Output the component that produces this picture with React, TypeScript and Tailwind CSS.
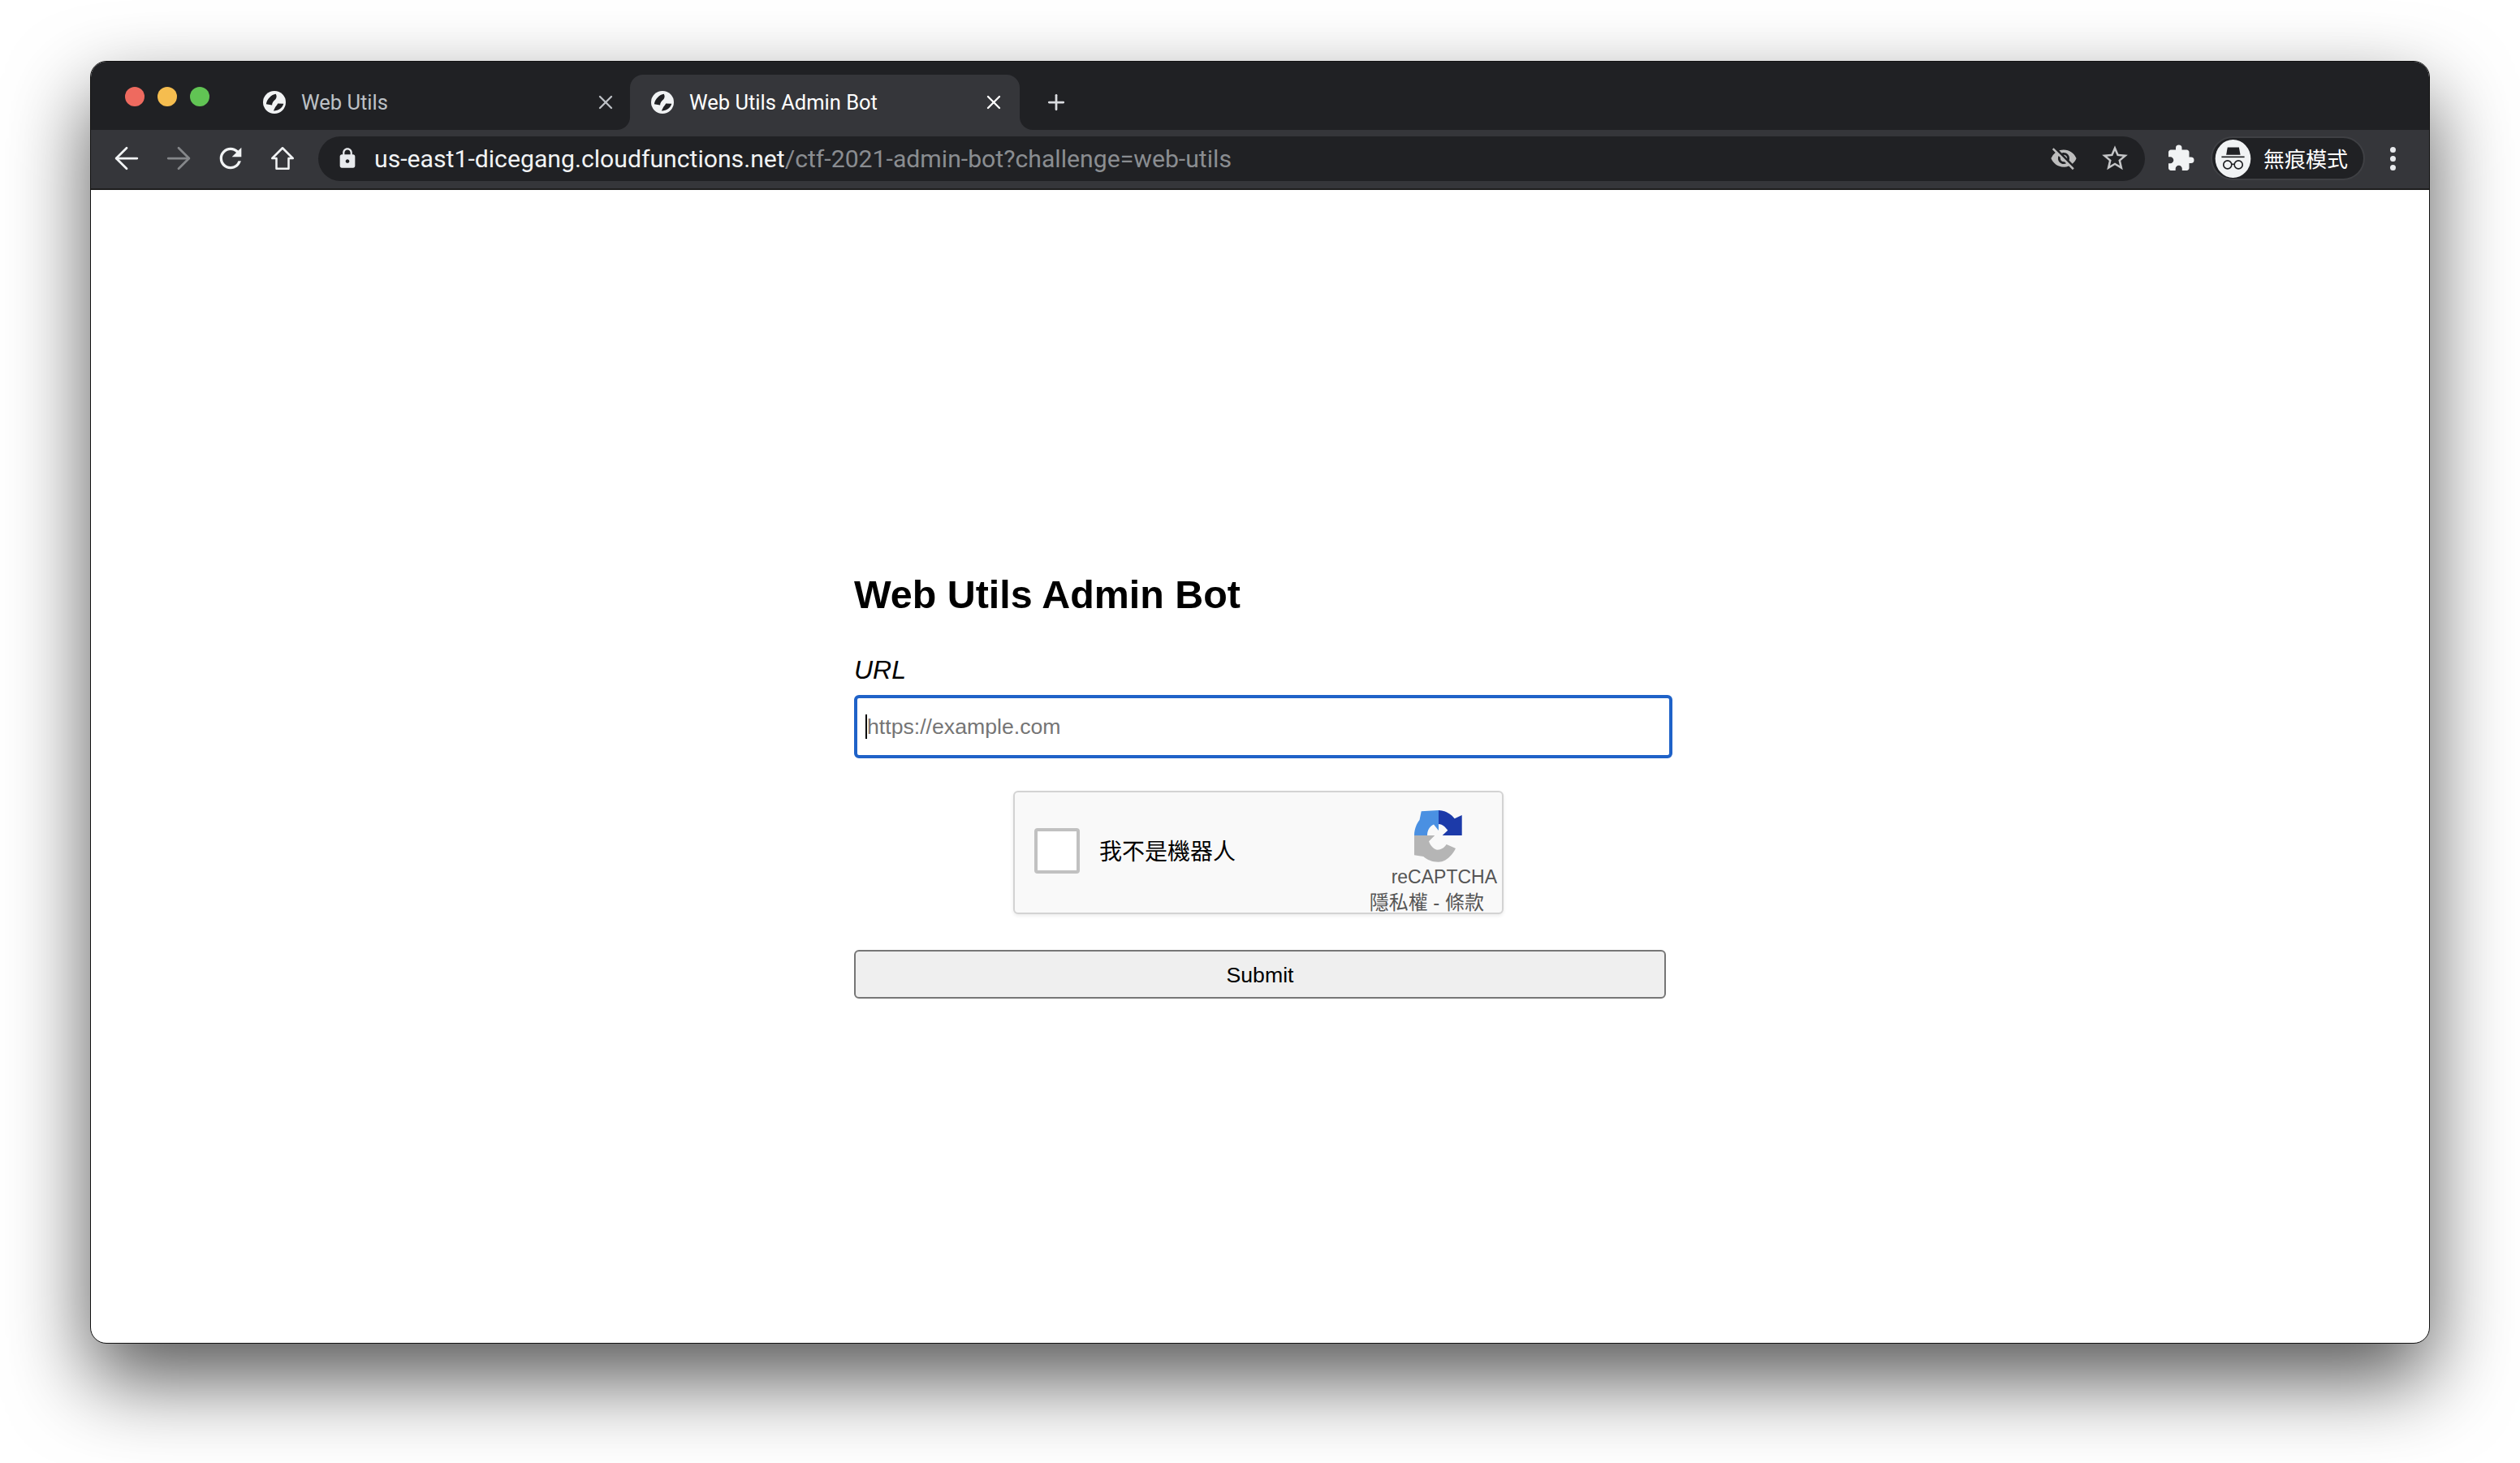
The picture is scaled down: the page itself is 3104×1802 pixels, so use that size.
import { ArrowLeft, ArrowRight, X, Plus } from 'lucide-react'
import { MdExtension, MdStarBorder, MdVisibilityOff, MdRefresh, MdLock } from 'react-icons/md'

const Globe = () => (
  <svg width="28" height="28" viewBox="0 0 24 24" className="shrink-0">
    <circle cx="12" cy="12" r="12" fill="#f1f3f4" />
    <path d="M13.5 3.2C9 3.8 4 8.5 3.3 14L9.5 15C9.5 12.5 11 11 12.5 9.5C14 8 15 6 13.5 3.2Z" fill="#202124" />
    <path d="M21.7 13.5L15.5 13.3C15 15.5 13.2 16 12.5 18L11 21C16 21.2 20.5 18 21.7 13.5Z" fill="#202124" />
  </svg>
)

const Tab = ({ title, active }: { title: string; active?: boolean }) => (
  <div className={active ? 'relative flex items-center w-[480px] h-[68px] pl-[26px] pr-[18px] rounded-t-[16px] bg-[#35363a] text-white' : 'flex items-center w-[478px] h-[68px] pl-[26px] pr-[16px] text-[#bdc1c6]'}>
    <Globe />
    <span className="ml-[19px] flex-1 text-[25.5px] leading-[32px]">{title}</span>
    <X size={28} strokeWidth={2} />
    {active && (
      <>
        <span className="absolute left-[-16px] bottom-0 w-[16px] h-[16px] bg-[#35363a]">
          <span className="block w-full h-full bg-[#202124] rounded-br-[16px]" />
        </span>
        <span className="absolute right-[-16px] bottom-0 w-[16px] h-[16px] bg-[#35363a]">
          <span className="block w-full h-full bg-[#202124] rounded-bl-[16px]" />
        </span>
      </>
    )}
  </div>
)

const NavButton = ({ children }: { children: React.ReactNode }) => (
  <div className="flex items-center justify-center w-[64px] h-[44px]">{children}</div>
)

const Incognito = () => (
  <svg width="45" height="47" viewBox="0 0 130 140" className="shrink-0">
    <ellipse cx="65" cy="70" rx="65" ry="70" fill="#f1f3f4" />
    <path d="M45 28H87L92 56H40Z" fill="#202124" />
    <rect x="23" y="61" width="84" height="5" fill="#202124" />
    <circle cx="45" cy="92" r="15" fill="none" stroke="#202124" strokeWidth="5" />
    <circle cx="85" cy="92" r="15" fill="none" stroke="#202124" strokeWidth="5" />
    <path d="M60 90H70" stroke="#202124" strokeWidth="5" />
  </svg>
)

const RecaptchaLogo = () => (
  <svg width="60" height="64" viewBox="0 0 60 64">
    <path d="M0 31C0 24 2.5 17 6.5 12L8.7 1.3L30 0V25L24 17.5C20 19 16 24 16 31Z" fill="#4a90e2" />
    <path d="M30 0C37 0 44 3.5 49.7 10.3L58.7 6V31H34.7L41.3 24.7C38 20 34 17 30 17Z" fill="#1c3aa9" />
    <path d="M0 31H25.3L18 38.3C20 44 24 48 28 48.7C33 48.7 37 46 39.7 42L51 47C46 57 38 63.7 29.7 63.7C22 63.7 16 61 11.3 57L0 55.3Z" fill="#b5b5b5" />
  </svg>
)

export default function App() {
  return (
    <div className="w-[3104px] h-[1802px] overflow-hidden bg-white pt-[75px] pl-[111px] font-['Liberation_Sans',sans-serif]">
      <div className="flex flex-col w-[2882px] h-[1580px] rounded-[20px] border border-[#111111] bg-white overflow-hidden shadow-[0_44px_100px_0_rgba(0,0,0,0.66)]">
        {/* tab strip */}
        <div className="flex items-end h-[84px] bg-[#202124] font-['Roboto',sans-serif]">
          <div className="flex self-start gap-[16px] w-[186px] pl-[42px] pt-[31px]">
            <span className="w-[24px] h-[24px] rounded-full bg-[#ee6a5f]" />
            <span className="w-[24px] h-[24px] rounded-full bg-[#f5bd4f]" />
            <span className="w-[24px] h-[24px] rounded-full bg-[#61c454]" />
          </div>
          <Tab title="Web Utils" />
          <Tab title="Web Utils Admin Bot" active />
          <div className="flex items-center h-[68px] ml-[30px] text-[#dadce0]">
            <Plus size={30} strokeWidth={2.2} />
          </div>
        </div>

        {/* toolbar */}
        <div className="flex items-center h-[74px] pb-[2px] pl-[12px] bg-[#35363a] border-b-2 border-[#1e1e1e] font-['Roboto',sans-serif]">
          <NavButton><ArrowLeft size={44} strokeWidth={1.5} color="#f1f3f4" /></NavButton>
          <NavButton><ArrowRight size={44} strokeWidth={1.5} color="#85878a" /></NavButton>
          <NavButton><MdRefresh size={40} color="#f1f3f4" /></NavButton>
          <NavButton>
            <svg width="36" height="36" viewBox="0 0 24 24" fill="none" stroke="#f1f3f4" strokeWidth="1.7" strokeLinejoin="round">
              <path d="M12 3.5L3.5 12H7V20.5H17V12H20.5Z" />
            </svg>
          </NavButton>
          <div className="flex items-center w-[2250px] h-[55px] ml-[12px] pl-[22px] pr-[18px] rounded-full bg-[#202124]">
            <MdLock size={28} color="#e8eaed" />
            <span className="ml-[19px] flex-1 pt-[2px] text-[30.2px] leading-[36px] text-[#f1f3f4]">
              us-east1-dicegang.cloudfunctions.net<span className="text-[#8a8d91]">/ctf-2021-admin-bot?challenge=web-utils</span>
            </span>
            <MdVisibilityOff size={34} color="#bdbdbd" />
            <MdStarBorder size={38} color="#c4c5c7" className="ml-[27px]" />
          </div>
          <MdExtension size={36} color="#f1f3f4" className="ml-[26px]" />
          <div className="flex items-center w-[190px] h-[54px] ml-[19px] pl-[3px] rounded-full bg-[#202124] border-2 border-[#3f4044]">
            <Incognito />
            <span className="ml-[15px] text-[26px] leading-[32px] text-white font-['Noto_Sans_CJK_TC',sans-serif]">無痕模式</span>
          </div>
          <div className="flex flex-col gap-[4px] ml-[31px]">
            <span className="w-[7px] h-[7px] rounded-full bg-[#e8eaed]" />
            <span className="w-[7px] h-[7px] rounded-full bg-[#e8eaed]" />
            <span className="w-[7px] h-[7px] rounded-full bg-[#e8eaed]" />
          </div>
        </div>

        {/* page */}
        <div className="flex-1 pt-[470px] text-black">
          <div className="w-[1000px] mx-auto">
            <h1 className="text-[48.4px] leading-[56px] font-bold">Web Utils Admin Bot</h1>
            <label className="block mt-[45px] text-[32px] leading-[40px] italic">URL</label>
            <div className="relative mt-[11px] w-[1008px]">
              <input
                placeholder="https://example.com"
                className="block w-full h-[78px] px-[12px] rounded-[6px] border-4 border-[#1f62c8] bg-white text-[26.67px] outline-none placeholder:text-[#757575]"
              />
              <span className="absolute left-[14px] top-[24px] w-[2px] h-[30px] bg-black" />
            </div>

            <div className="flex items-start w-[604px] h-[152px] mt-[40px] ml-[196px] rounded-[6px] border-2 border-[#d3d3d3] bg-[#f9f9f9] shadow-[0_2px_4px_rgba(0,0,0,0.08)]">
              <span className="w-[56px] h-[56px] mt-[44px] ml-[24px] rounded-[4px] border-4 border-[#c1c1c1] bg-white" />
              <span className="mt-[58px] ml-[24px] flex-1 text-[28px] leading-[32px] font-['Liberation_Sans','Noto_Sans_CJK_TC',sans-serif]">我不是機器人</span>
              <div className="flex flex-col items-end pt-[22px] pr-[6px]">
                <div className="mr-[42px]"><RecaptchaLogo /></div>
                <span className="mt-[4px] text-[23px] leading-[28px] text-[#555555]">reCAPTCHA</span>
                <span className="mt-[2px] mr-[16px] text-[24px] leading-[32px] text-[#555555] font-['Liberation_Sans','Noto_Sans_CJK_TC',sans-serif]">隱私權 - 條款</span>
              </div>
            </div>

            <button className="block w-full h-[60px] mt-[44px] pt-[2px] rounded-[6px] border-2 border-[#767676] bg-[#efefef] text-[26.67px] text-black">
              Submit
            </button>
          </div>
        </div>
      </div>
    </div>
  )
}
